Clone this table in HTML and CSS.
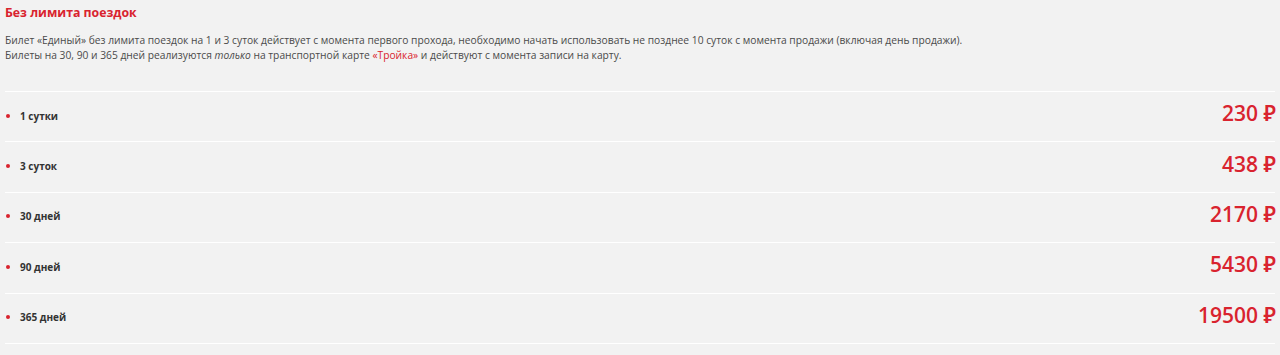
FILE: index.html
```html
<!DOCTYPE html>
<html lang="ru">
<head>
<meta charset="utf-8">
<link rel="stylesheet" href="styles.css">
</head>
<body>
<section class="tariff">
  <h2 class="tariff__title">Без лимита поездок</h2>
  <div class="tariff__desc">
    <p>Билет «Единый» без лимита поездок на 1 и 3 суток действует с момента первого прохода, необходимо начать использовать не позднее 10 суток с момента продажи (включая день продажи).</p>
    <p>Билеты на 30, 90 и 365 дней реализуются <em>только</em> на транспортной карте <a class="link" href="#">«Тройка»</a> и действуют с момента записи на карту.</p>
  </div>
  <ul class="prices">
    <li class="prices__row"><span class="prices__name">1 сутки</span><span class="prices__value">230 ₽</span></li>
    <li class="prices__row"><span class="prices__name">3 суток</span><span class="prices__value">438 ₽</span></li>
    <li class="prices__row"><span class="prices__name">30 дней</span><span class="prices__value">2170 ₽</span></li>
    <li class="prices__row"><span class="prices__name">90 дней</span><span class="prices__value">5430 ₽</span></li>
    <li class="prices__row"><span class="prices__name">365 дней</span><span class="prices__value">19500 ₽</span></li>
  </ul>
</section>
</body>
</html>
```

FILE: styles.css
```css
html, body {
  margin: 0;
  padding: 0;
  background: #f2f2f2;
}
body {
  font-family: "Open Sans", "Noto Sans", sans-serif;
  color: #444;
}
.tariff {
  padding: 4px 5px 0 5px;
}
.tariff__title {
  margin: 0;
  font-size: 12.3px;
  line-height: 18px;
  font-weight: 700;
  color: #d9232e;
}
.tariff__desc {
  margin-top: 11px;
  font-size: 10.25px;
  line-height: 15px;
  color: #4a4a4a;
}
.tariff__desc p {
  margin: 0;
}
.link {
  color: #d9232e;
  text-decoration: none;
}
.prices {
  list-style: none;
  margin: 28px 0 0 0;
  padding: 0;
  border-bottom: 1px solid #fff;
}
.prices__row {
  display: flex;
  align-items: center;
  justify-content: space-between;
  height: 49.4px;
  border-top: 1px solid #fff;
}
.prices__name {
  position: relative;
  padding-left: 15px;
  margin-top: -2px;
  font-size: 10px;
  font-weight: 700;
  color: #333;
}
.prices__name::before {
  content: "";
  position: absolute;
  left: 1px;
  top: 50%;
  width: 4px;
  height: 4px;
  margin-top: -2px;
  border-radius: 50%;
  background: #d9232e;
}
.prices__value {
  font-size: 21px;
  font-weight: 600;
  color: #d9232e;
  margin-top: -7px;
  margin-right: -1px;
}
```
